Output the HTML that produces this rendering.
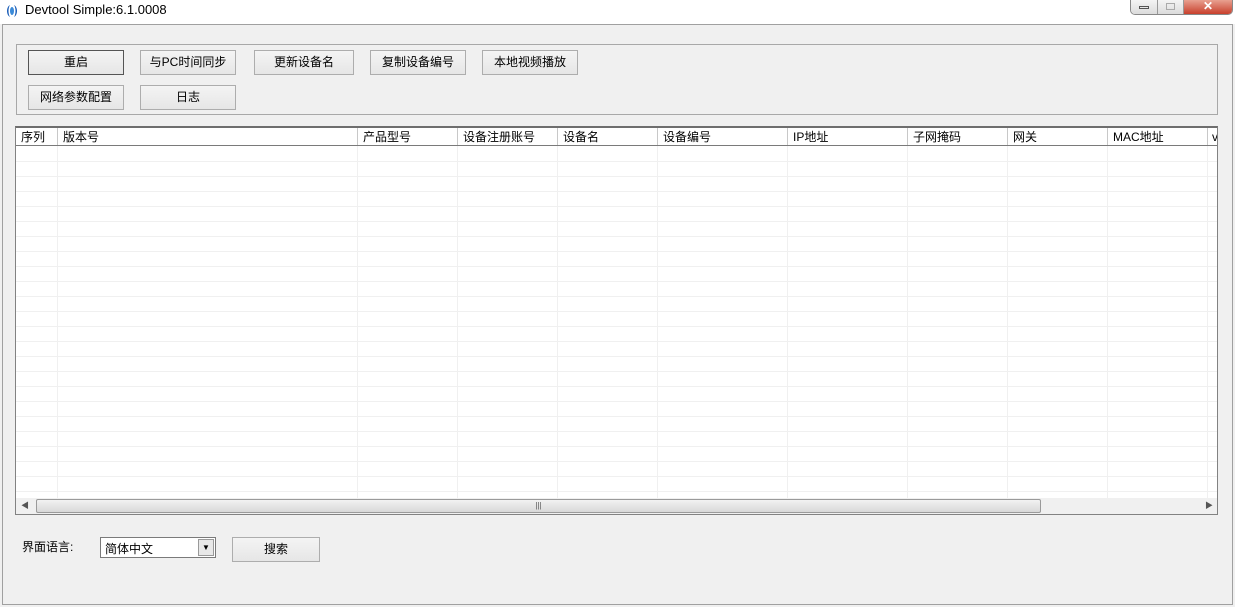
<!DOCTYPE html>
<html><head><meta charset="utf-8"><style>
*{margin:0;padding:0;box-sizing:border-box}
body{width:1235px;height:607px;background:#f0f0f0;font-family:"Liberation Sans","Noto Sans CJK SC",sans-serif;font-size:12px;position:relative;overflow:hidden;color:#000}
.abs{position:absolute}
.title{left:0;top:0;width:1235px;height:24px;background:#fff}
.btn{position:absolute;height:25px;border:1px solid #adadad;background:linear-gradient(#f4f4f4,#e6e6e6);text-align:center;line-height:23px;font-size:12px}
.hd{position:absolute;top:128px;height:17px;line-height:19px;font-size:12px;padding-left:5px;border-right:1px solid #c8c8c8;background:#fff}
</style></head><body>
<div class="abs title"></div>
<svg class="abs" style="left:4px;top:3px" width="16" height="16" viewBox="0 0 16 16"><path d="M6 2C2 4 2 12 6 14C4 11 4 5 6 2Z" fill="#1d5fb8"/><path d="M10 2C14 4 14 12 10 14C12 11 12 5 10 2Z" fill="#1d5fb8"/><ellipse cx="8" cy="8" rx="2" ry="4" fill="#3a8ad8"/></svg>
<div class="abs" style="left:25px;top:2px;font-size:13px">Devtool Simple:6.1.0008</div>
<div class="abs" style="left:1130px;top:0;width:103px;height:15px;border:1px solid #888;border-top:none;border-radius:0 0 5px 5px;overflow:hidden;display:flex">
<div style="width:27px;background:linear-gradient(#f4f4f4,#dcdcdc);border-right:1px solid #999"><div style="margin:6px 0 0 8px;width:10px;height:3px;border:1px solid #555"></div></div>
<div style="width:26px;background:linear-gradient(#f4f4f4,#dcdcdc);border-right:1px solid #999"><div style="margin:3px 0 0 8px;width:9px;height:7px;border:1px solid #aaa"></div></div>
<div style="flex:1;background:linear-gradient(#e8a090,#c8402c);color:#fff;text-align:center;font-weight:bold;font-size:12px;line-height:13px">✕</div></div>
<div class="abs" style="left:2px;top:24px;width:1231px;height:581px;border:1px solid #a0a0a0;background:#f0f0f0"></div>
<div class="abs" style="left:16px;top:44px;width:1202px;height:71px;border:1px solid #a8a8a8"></div>
<div class="btn" style="left:28px;top:50px;width:96px;border:1px solid #555">重启</div>
<div class="btn" style="left:140px;top:50px;width:96px">与PC时间同步</div>
<div class="btn" style="left:254px;top:50px;width:100px">更新设备名</div>
<div class="btn" style="left:370px;top:50px;width:96px">复制设备编号</div>
<div class="btn" style="left:482px;top:50px;width:96px">本地视频播放</div>
<div class="btn" style="left:28px;top:85px;width:96px">网络参数配置</div>
<div class="btn" style="left:140px;top:85px;width:96px">日志</div>
<div class="abs" style="left:15px;top:126px;width:1203px;height:389px;border:1px solid #828282;border-top:2px solid #6e6e6e;background:#fff;
background-image:repeating-linear-gradient(#fff 0,#fff 14px,#f0f0f0 14px,#f0f0f0 15px);background-position:0 19px;background-repeat:repeat"></div>
<div class="abs" style="left:16px;top:128px;width:1201px;height:18px;background:#fff;border-bottom:2px solid #7a7a7a"></div>
<div class="hd" style="left:16px;width:42px">序列</div>
<div class="hd" style="left:58px;width:300px">版本号</div>
<div class="hd" style="left:358px;width:100px">产品型号</div>
<div class="hd" style="left:458px;width:100px">设备注册账号</div>
<div class="hd" style="left:558px;width:100px">设备名</div>
<div class="hd" style="left:658px;width:130px">设备编号</div>
<div class="hd" style="left:788px;width:120px">IP地址</div>
<div class="hd" style="left:908px;width:100px">子网掩码</div>
<div class="hd" style="left:1008px;width:100px">网关</div>
<div class="hd" style="left:1108px;width:100px">MAC地址</div>
<div class="hd" style="left:1208px;width:9px;border:none;padding-left:4px;overflow:hidden">v</div>
<div class="abs" style="left:57px;top:146px;width:1px;height:352px;background:#f0f0f0"></div>
<div class="abs" style="left:357px;top:146px;width:1px;height:352px;background:#f0f0f0"></div>
<div class="abs" style="left:457px;top:146px;width:1px;height:352px;background:#f0f0f0"></div>
<div class="abs" style="left:557px;top:146px;width:1px;height:352px;background:#f0f0f0"></div>
<div class="abs" style="left:657px;top:146px;width:1px;height:352px;background:#f0f0f0"></div>
<div class="abs" style="left:787px;top:146px;width:1px;height:352px;background:#f0f0f0"></div>
<div class="abs" style="left:907px;top:146px;width:1px;height:352px;background:#f0f0f0"></div>
<div class="abs" style="left:1007px;top:146px;width:1px;height:352px;background:#f0f0f0"></div>
<div class="abs" style="left:1107px;top:146px;width:1px;height:352px;background:#f0f0f0"></div>
<div class="abs" style="left:1207px;top:146px;width:1px;height:352px;background:#f0f0f0"></div>
<div class="abs" style="left:16px;top:498px;width:1201px;height:16px;background:#f0f0f0"></div>
<div class="abs" style="left:21px;top:500px;font-size:8px;color:#555">◀</div>
<div class="abs" style="left:1205px;top:500px;font-size:8px;color:#555">▶</div>
<div class="abs" style="left:36px;top:499px;width:1005px;height:14px;border:1px solid #9a9a9a;border-radius:2px;background:linear-gradient(#f2f2f2,#d8d8d8);text-align:center;font-size:8px;line-height:12px;color:#555">|||</div>
<div class="abs" style="left:22px;top:538px">界面语言:</div>
<div class="abs" style="left:100px;top:537px;width:116px;height:21px;border:1px solid #7a7a7a;background:#fff;padding:2px 4px;font-size:12px">简体中文
<div style="position:absolute;right:1px;top:1px;width:16px;height:17px;background:#e8e8e8;border:1px solid #999;font-size:8px;text-align:center;line-height:15px">▼</div></div>
<div class="btn" style="left:232px;top:537px;width:88px">搜索</div>
</body></html>
